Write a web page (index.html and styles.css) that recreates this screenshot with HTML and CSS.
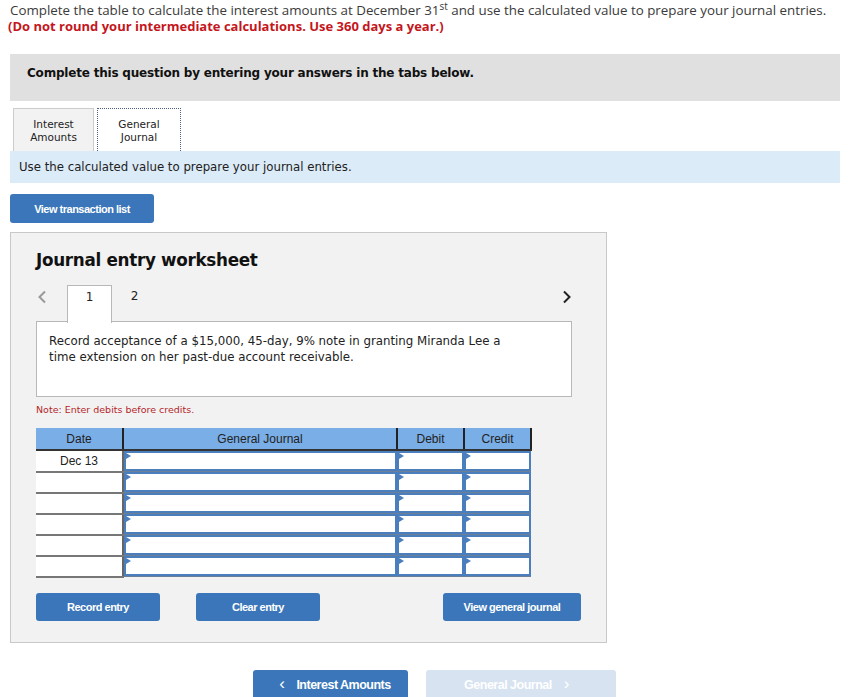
FILE: index.html
```html
<!DOCTYPE html>
<html>
<head>
<meta charset="utf-8">
<link rel="stylesheet" href="styles.css">
</head>
<body>
<div class="page">
  <p class="intro">Complete the table to calculate the interest amounts at December 31<sup>st</sup> and use the calculated value to prepare your journal entries.</p>
  <p class="warn">(Do not round your intermediate calculations. Use 360 days a year.)</p>

  <div class="banner">Complete this question by entering your answers in the tabs below.</div>

  <div class="tabs">
    <div class="tab">Interest<br>Amounts</div>
    <div class="tab active">General<br>Journal</div>
  </div>
  <div class="infobar">Use the calculated value to prepare your journal entries.</div>

  <div class="action-row">
    <button class="btn btn-list">View transaction list</button>
  </div>

  <div class="worksheet">
    <h2 class="ws-title">Journal entry worksheet</h2>
    <div class="ws-nav">
      <span class="chev chev-left">
        <svg width="10" height="14" viewBox="0 0 10 14"><path d="M8 1.5 L2.5 7 L8 12.5" fill="none" stroke="#999" stroke-width="2"/></svg>
      </span>
      <span class="step current">1</span>
      <span class="step">2</span>
      <span class="chev chev-right">
        <svg width="10" height="14" viewBox="0 0 10 14"><path d="M2 1.5 L7.5 7 L2 12.5" fill="none" stroke="#222" stroke-width="2"/></svg>
      </span>
    </div>
    <div class="desc">Record acceptance of a $15,000, 45-day, 9% note in granting Miranda Lee a time extension on her past-due account receivable.</div>
    <p class="note">Note: Enter debits before credits.</p>

    <table class="journal">
      <colgroup>
        <col class="c-date"><col class="c-gj"><col class="c-amt"><col class="c-amt">
      </colgroup>
      <thead>
        <tr><th>Date</th><th>General Journal</th><th>Debit</th><th>Credit</th></tr>
      </thead>
      <tbody>
        <tr><td class="date">Dec 13</td><td class="inp"><div class="field"></div></td><td class="inp"><div class="field"></div></td><td class="inp"><div class="field"></div></td></tr>
        <tr><td class="date"></td><td class="inp"><div class="field"></div></td><td class="inp"><div class="field"></div></td><td class="inp"><div class="field"></div></td></tr>
        <tr><td class="date"></td><td class="inp"><div class="field"></div></td><td class="inp"><div class="field"></div></td><td class="inp"><div class="field"></div></td></tr>
        <tr><td class="date"></td><td class="inp"><div class="field"></div></td><td class="inp"><div class="field"></div></td><td class="inp"><div class="field"></div></td></tr>
        <tr><td class="date"></td><td class="inp"><div class="field"></div></td><td class="inp"><div class="field"></div></td><td class="inp"><div class="field"></div></td></tr>
        <tr><td class="date"></td><td class="inp"><div class="field"></div></td><td class="inp"><div class="field"></div></td><td class="inp"><div class="field"></div></td></tr>
      </tbody>
    </table>

    <div class="ws-buttons">
      <button class="btn btn-ws">Record entry</button>
      <button class="btn btn-ws btn-clear">Clear entry</button>
      <button class="btn btn-ws btn-view">View general journal</button>
    </div>
  </div>

  <div class="bottom-nav">
    <button class="btn nav-btn"><span class="nav-chev">&lsaquo;</span> Interest Amounts</button>
    <button class="btn nav-btn disabled">General Journal <span class="nav-chev">&rsaquo;</span></button>
  </div>
</div>
</body>
</html>
```

FILE: styles.css
```css
* { box-sizing: border-box; }
html, body { margin: 0; padding: 0; background: #fff; }
body { font-family: "DejaVu Sans", Verdana, sans-serif; color: #222; }

.page { padding: 0 8px 0 10px; width: 848px; }

.intro {
  margin: 0;
  padding-top: 2px;
  font-family: "Open Sans", "Liberation Sans", sans-serif;
  font-size: 13.35px;
  line-height: 16px;
  color: #3a3a3a;
  white-space: nowrap;
}
.intro sup { font-size: 10px; line-height: 0; vertical-align: 5px; }

.warn {
  margin: 1px 0 0 -2px;
  font-family: "Open Sans", "Liberation Sans", sans-serif;
  font-weight: 700;
  font-size: 13px;
  line-height: 14px;
  color: #c4161c;
}

.banner {
  margin-top: 21px;
  width: 830px;
  height: 47px;
  background: #e0e0e0;
  padding: 12px 0 0 17px;
  font-weight: 700;
  font-size: 12px;
  letter-spacing: -0.2px;
  color: #111;
}

.tabs { display: flex; gap: 3px; margin: 7px 0 0 3px; height: 43px; }
.tab {
  width: 81px;
  height: 43px;
  border: 1px solid #ccc;
  border-bottom: none;
  background: #f2f2f2;
  font-size: 10.5px;
  line-height: 13px;
  text-align: center;
  padding-top: 9px;
  color: #222;
}
.tab.active {
  width: 84px;
  background: #fff;
  border: 1px dotted #4a5d7e;
  border-bottom: none;
}

.infobar {
  width: 830px;
  height: 32px;
  background: #dcebf8;
  padding: 9px 0 0 9px;
  font-size: 11.75px;
  color: #222;
}

.action-row { margin-top: 11px; }
.btn {
  font-family: "Liberation Sans", Arial, sans-serif;
  font-weight: 700;
  font-size: 11px;
  letter-spacing: -0.5px;
  color: #fff;
  background: #3a76b9;
  border: none;
  border-radius: 3px;
  padding: 0;
  cursor: pointer;
}
.btn-list { width: 144px; height: 29px; }

.worksheet {
  margin-top: 9px;
  width: 597px;
  background: #f2f2f2;
  border: 1px solid #c8c8c8;
  padding: 16px 34px 21px 25px;
}
.ws-title {
  margin: 0;
  font-size: 16.8px;
  line-height: 22px;
  font-weight: 700;
  color: #111;
  letter-spacing: -0.3px;
}
.ws-nav {
  margin-top: 14px;
  display: flex;
  align-items: stretch;
  height: 37px;
  width: 536px;
  position: relative;
}
.chev { display: flex; align-items: center; height: 24px; }
.chev-left { width: 31px; padding-left: 1px; }
.chev-right { margin-left: auto; width: 10px; }
.step {
  width: 45px;
  height: 37px;
  font-size: 12px;
  text-align: center;
  padding-top: 4px;
  color: #222;
}
.step.current {
  background: #fff;
  border: 1px solid #b8b8b8;
  border-bottom: none;
  position: relative;
  z-index: 1;
  height: 38px;
}
.desc {
  width: 536px;
  height: 76px;
  background: #fff;
  border: 1px solid #b8b8b8;
  margin-top: -1px;
  padding: 11px 60px 0 12px;
  font-size: 11.8px;
  line-height: 16px;
  color: #222;
}
.note {
  margin: 7px 0 0 0;
  font-size: 9.5px;
  line-height: 12px;
  color: #b5262b;
}

.journal {
  margin-top: 12px;
  border-collapse: collapse;
  table-layout: fixed;
  width: 495px;
  font-family: "Liberation Sans", Arial, sans-serif;
  font-size: 12px;
}
.c-date { width: 87px; }
.c-gj { width: 274px; }
.c-amt { width: 67px; }
.journal th {
  height: 22px;
  background: #7aaee6;
  font-weight: 400;
  color: #222;
  border-bottom: 2px solid #333;
  border-left: 2px solid #222;
  padding: 0;
  text-align: center;
}
.journal th:first-child { border-left: none; }
.journal th:last-child { border-right: 2px solid #222; }
.journal td { padding: 0; height: 21px; }
.journal td.date {
  background: #fff;
  text-align: center;
  border-bottom: 2px solid #777;
  border-right: 2px solid #666;
  color: #222;
  vertical-align: middle;
}
.journal td.inp { background: #6b7f99; padding: 0 0 1px 0; }
.field {
  height: 20px;
  background: #fff;
  border: 2px solid #4b7ebd;
  position: relative;
}
.field::before {
  content: "";
  position: absolute;
  left: 0;
  top: 0;
  border-left: 5px solid #4b7ebd;
  border-top: 3px solid transparent;
  border-bottom: 3px solid transparent;
}

.ws-buttons { margin-top: 15px; display: flex; height: 28px; }
.btn-ws { width: 124px; height: 28px; }
.btn-clear { margin-left: 36px; }
.btn-view { margin-left: auto; width: 138px; margin-right: -9px; }

.bottom-nav {
  margin-top: 27px;
  margin-left: 243px;
  display: flex;
  gap: 18px;
}
.nav-btn { width: 155px; height: 34px; font-size: 12.5px; padding-bottom: 6px; }
.nav-btn.disabled { width: 190px; background: #d7e3f1; color: #fff; }
.nav-chev { font-size: 17px; font-weight: 400; margin: 0 9px; }
```
